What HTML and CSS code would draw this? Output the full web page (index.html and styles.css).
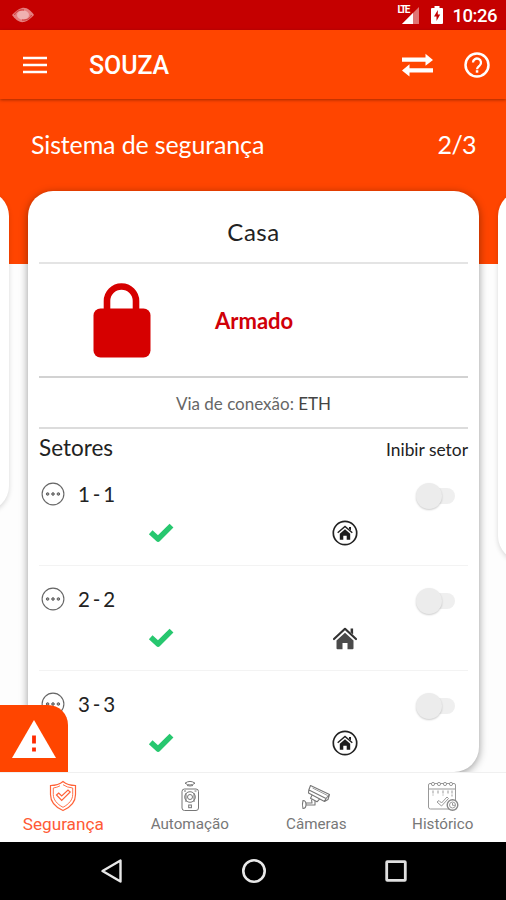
FILE: index.html
```html
<!DOCTYPE html>
<html lang="pt-BR">
<head>
<meta charset="utf-8">
<title>Souza</title>
<link rel="stylesheet" href="styles.css">
</head>
<body>
<svg class="defs" width="0" height="0">
  <symbol id="more" viewBox="0 0 24 24"><circle cx="12" cy="12" r="10.9" fill="none" stroke="#666" stroke-width="1.1"/><g fill="#999" stroke="#555" stroke-width=".9"><circle cx="6.6" cy="12" r="1.3"/><circle cx="12" cy="12" r="1.3"/><circle cx="17.4" cy="12" r="1.3"/></g></symbol>
  <symbol id="check" viewBox="0 0 24 20"><path d="M2.2 9.8 9.2 16.2 22 3.4" fill="none" stroke="#27c76f" stroke-width="5.2" stroke-linejoin="round"/></symbol>
  <symbol id="home-ring" viewBox="0 0 26 26"><circle cx="13" cy="13" r="11.7" fill="none" stroke="#222" stroke-width="1.7"/><path d="M5.7 12.8 13 6.4l7.3 6.4" fill="none" stroke="#222" stroke-width="1.5"/><path d="M17 7h2v3.500l-2-1.700zM13 9.300l5.200 4.500v6h-3.500v-4h-3.400v4H7.800v-6z" fill="#1b1b1b"/></symbol>
  <symbol id="home" viewBox="0 0 26 26"><path d="M2 14 13 3.800 24 14" fill="none" stroke="#333" stroke-width="2.200" stroke-linecap="round" stroke-linejoin="round"/><path d="M18.600 3.600h2.500v6l-2.500-2.400z" fill="#333"/><path d="M13 7.700l8.500 7.800v7.800q0 1-1 1h-5v-6.300h-5v6.300h-5q-1 0-1-1v-7.800z" fill="#4a4a4a"/></symbol>
</svg>
<div class="screen">
  <div class="status">
    <svg class="brand" width="22" height="16" viewBox="0 0 22 16"><path d="M0 8C3 5 6 2 10 1c5-1 9 3 12 7-3 3-6 6-10 7C7 16 3 12 0 8z" fill="#e57f7f"/><ellipse cx="11" cy="8" rx="6" ry="4.500" fill="#efb0b0"/><path d="M2.500 8C4 4 8 2.500 12 3M19.500 8C18 12 14 13.500 10 13" fill="none" stroke="#cf3030" stroke-width="1"/></svg>
    <div class="status-right">
      <div class="signal"><span class="lte">LTE</span><svg width="22" height="18" viewBox="0 0 22 18"><path d="M4 18 21 1v17z" fill="#df7474"/><path d="M4 18 15 7v11z" fill="#fff"/></svg></div>
      <svg class="battery" width="12" height="18" viewBox="0 0 12 18"><path d="M3.500 0h5v2H11q1 0 1 1v14q0 1-1 1H1q-1 0-1-1V3q0-1 1-1h2.500z" fill="#fff"/><path d="M6.800 4 3 10.500h2.500V15l3.700-6.500H6.800z" fill="#c50000"/></svg>
      <span class="clock">10:26</span>
    </div>
  </div>
  <header class="appbar">
    <svg class="menu" width="24" height="18" viewBox="0 0 24 18"><path d="M0 2h24M0 9h24M0 16h24" stroke="#fff" stroke-width="2.700"/></svg>
    <h1>SOUZA</h1>
    <svg class="swap" width="31" height="24" viewBox="0 0 31 24"><path d="M0 4.500h23.500V.7L31 7l-7.500 5.800V8.800H0zM31 15.200H7.500v-3.900L0 17.500l7.500 6v-4H31z" fill="#fff"/></svg>
    <svg class="help" width="26" height="26" viewBox="0 0 26 26"><circle cx="13" cy="13" r="11.500" fill="none" stroke="#fff" stroke-width="2.500"/><path d="M9 10.600a4 4 0 1 1 6.700 2.900C14.200 14.800 13 15.500 13 17.200" fill="none" stroke="#fff" stroke-width="2.300"/><rect x="11.800" y="18.200" width="2.500" height="2.500" fill="#fff"/></svg>
  </header>
  <main>
    <div class="section-head"><span>Sistema de segurança</span><span class="count">2/3</span></div>
    <div class="carousel">
      <section class="card prev"></section>
      <section class="card">
        <h2>Casa</h2>
        <div class="state">
          <svg class="lock" width="58" height="76" viewBox="0 0 58 76"><path d="M14 28V18a14.500 14.500 0 0 1 29 0v10" fill="none" stroke="#d60000" stroke-width="6.600"/><rect x=".5" y="25.500" width="57" height="49" rx="7" fill="#d60000"/></svg>
          <span class="armed">Armado</span>
        </div>
        <p class="via">Via de conexão: <b>ETH</b></p>
        <div class="sectors-head"><span>Setores</span><span class="inhibit">Inibir setor</span></div>
        <div class="sector">
          <div class="top"><svg class="more"><use href="#more"/></svg><span class="name">1 - 1</span><i class="toggle"></i></div>
          <div class="icons"><svg class="check"><use href="#check"/></svg><svg class="house"><use href="#home-ring"/></svg></div>
        </div>
        <div class="sector">
          <div class="top"><svg class="more"><use href="#more"/></svg><span class="name">2 - 2</span><i class="toggle"></i></div>
          <div class="icons"><svg class="check"><use href="#check"/></svg><svg class="house"><use href="#home"/></svg></div>
        </div>
        <div class="sector">
          <div class="top"><svg class="more"><use href="#more"/></svg><span class="name">3 - 3</span><i class="toggle"></i></div>
          <div class="icons"><svg class="check"><use href="#check"/></svg><svg class="house"><use href="#home-ring"/></svg></div>
        </div>
      </section>
      <section class="card next"></section>
    </div>
    <div class="alert"><svg width="44" height="38" viewBox="0 0 44 38"><path d="M22 0 44 38H0z" fill="#fff"/><path d="M20.100 15.500h3.800v8h-3.800zM20.100 27.500h3.800v4h-3.800z" fill="#ff2a00"/></svg></div>
  </main>
  <nav class="tabs">
    <div class="tab active">
      <svg width="30" height="32" viewBox="0 0 30 32" fill="none" stroke="#ff6238" stroke-width="1.200"><path d="M15 1.500C11 5 7 5.500 2.500 5.500v9C2.500 22 8 27.500 15 30.500 22 27.500 27.500 22 27.500 14.500v-9C23 5.500 19 5 15 1.500z"/><path d="M12 5.800Q9 7.500 5.300 8v6.500c0 5 3.500 9.500 9.700 12.800 6.200-3.300 9.700-7.800 9.700-12.800V8Q19 7.500 15 4.700" stroke-width=".9"/><path d="m8.500 15 2.200-2 3 3 6.300-6 2.200 2-8.500 8.500z"/></svg>
      <span>Segurança</span>
    </div>
    <div class="tab">
      <svg width="30" height="32" viewBox="0 0 30 32" fill="none" stroke="#777" stroke-width="1"><path d="M10 3.200q5-3.600 10 0M10 3.200q5 3.600 10 0M12 5.500q3 1 6 0"/><rect x="7" y="9" width="16.500" height="21.500" rx="2.500"/><circle cx="15" cy="17" r="5.300"/><circle cx="15" cy="17" r="2.500"/><path d="M11 13v9M19 13v9M9 11h2M19.500 11h2"/><rect x="13.700" y="25" width="2.700" height="2.700"/></svg>
      <span>Automação</span>
    </div>
    <div class="tab">
      <svg width="32" height="32" viewBox="0 0 32 32" fill="none" stroke="#777" stroke-width="1.100" stroke-linejoin="round"><path d="m10.500 5.500 19 9-1.500 5-3.500 2-16-8.500 .3-3zM9 10l17 8.500 3.500-4M26 18.500l-1.500 3M12 15.300l-1.500 3 6.500 3.500 2.500-2.700"/><path d="M15 21v4H6v-2h6l-.5-3.500M3 20.500q3 0 3 4t-3 4q-1.200-4 0-8z"/><path d="m12.500 8 15 7.500" stroke-width=".7"/></svg>
      <span>Câmeras</span>
    </div>
    <div class="tab">
      <svg width="32" height="32" viewBox="0 0 32 32" fill="none" stroke="#999" stroke-width="1"><path d="M24 29H3.500q-2 0-2-2V5q0-1.500 1.500-1.500h24q1.500 0 1.500 1.500v16M1.500 9h27" /><path d="M6 10.500v5M11 10.500v4M16 10.500v5M21 10.500v4M25 10.500v6" stroke-dasharray="3 1"/><g fill="#fff"><circle cx="6" cy="4" r="1.600"/><circle cx="12" cy="4" r="1.600"/><circle cx="18" cy="4" r="1.600"/><circle cx="24" cy="4" r="1.600"/></g><path d="m10 22 2-1.500 2.500 2.500 5.500-6 1.500 1.500-7 7.500z"/><circle cx="25.500" cy="25" r="5.300" fill="#fff" stroke="#888" stroke-width="1.400"/><circle cx="25.500" cy="25" r="3"/><path d="M25.500 23v2.300H28"/></svg>
      <span>Histórico</span>
    </div>
  </nav>
  <footer class="sysnav">
    <svg width="24" height="26" viewBox="0 0 24 26"><path d="M20.500 2.500v21L2.500 13z" fill="none" stroke="#e8e8e8" stroke-width="2.400" stroke-linejoin="round"/></svg>
    <svg class="home-key" width="26" height="26" viewBox="0 0 26 26"><circle cx="13" cy="13" r="10.700" fill="none" stroke="#e8e8e8" stroke-width="2.600"/></svg>
    <svg width="22" height="22" viewBox="0 0 22 22"><rect x="1.700" y="1.700" width="18.600" height="18.600" rx=".6" fill="none" stroke="#e0e0e0" stroke-width="2.800"/></svg>
  </footer>
</div>
</body>
</html>
```
FILE: styles.css
```css
* { box-sizing: border-box; }
body { margin: 0; font-family: Lato, "Liberation Sans", sans-serif; color: #222; }
svg { display: block; flex: none; }
h1, h2, p { margin: 0; font-weight: 400; }
.defs { position: absolute; }
.screen { width: 506px; height: 900px; overflow: hidden; display: flex; flex-direction: column; background: #fff; }

.status { height: 30px; flex: none; background: #c50000; color: #fff; display: flex; align-items: center; justify-content: space-between; padding: 0 9px 0 12px; }
.status-right { display: flex; align-items: center; gap: 10px; font-family: Roboto, sans-serif; }
.signal { display: flex; position: relative; margin-right: 1px; }
.lte { position: absolute; left: 0; top: -1px; font-size: 10px; line-height: 9px; font-weight: 700; letter-spacing: -1.7px; }
.clock { font-size: 18.5px; font-weight: 500; letter-spacing: -0.5px; line-height: 22px; margin-top: 2px; }

.appbar { height: 69px; flex: none; background: #ff4500; color: #fff; display: flex; align-items: center; padding: 0 16px 0 23px; box-shadow: 0 1px 3px rgba(90, 20, 0, .55); z-index: 1; }
.appbar h1 { font: 500 25px/30px Roboto, sans-serif; margin-left: 42px; margin-top: 3px; letter-spacing: -0.1px; flex: 1; }
.swap { margin-right: 31px; }

main { height: 673px; flex: none; position: relative; overflow: hidden; background: linear-gradient(#ff4500 165px, #fdfdfd 165px); }
.section-head { height: 92px; padding: 0 30px 2px 31px; display: flex; justify-content: space-between; align-items: center; color: #fff; font-size: 25px; line-height: 30px; letter-spacing: -0.14px; }
.count { letter-spacing: -0.6px; }
.carousel { display: flex; gap: 19px; align-items: flex-start; margin-left: -442px; width: 1391px; }
.card { width: 451px; height: 581px; flex: none; background: #fff; border-radius: 25px; padding: 0 11px; box-shadow: 0 2px 8px rgba(0, 0, 0, .4); overflow: hidden; }
.card.prev { height: 320px; box-shadow: 0 2px 5px rgba(0, 0, 0, .15); }
.card.next { height: 370px; box-shadow: 0 2px 5px rgba(0, 0, 0, .15); }
.card h2 { height: 73px; border-bottom: 2px solid #e4e4e4; text-align: center; font-size: 24px; line-height: 82px; letter-spacing: .5px; }
.state { height: 114px; border-bottom: 2px solid #d2d2d2; display: flex; align-items: center; padding: 2px 0 0 54px; }
.armed { color: #d00008; font-size: 22px; font-weight: 700; margin-left: 64px; padding-bottom: 2px; }
.via { height: 51px; border-bottom: 2px solid #dcdcdc; text-align: center; color: #666; font-size: 17px; line-height: 52px; }
.via b { font-weight: 400; color: #444; }
.sectors-head { height: 32px; display: flex; justify-content: space-between; align-items: center; font-size: 22.500px; padding-top: 5px; }
.inhibit { font-size: 17.400px; padding-top: 4px; }
.sector { height: 105px; border-bottom: 1px solid #f3f3f3; padding: 18px 13px 0 2px; }
.top { display: flex; align-items: center; height: 30px; }
.name { font-size: 20.500px; letter-spacing: -0.9px; word-spacing: -0.6px; padding-bottom: 1px; }
.more { width: 24px; height: 24px; margin-right: 13px; }
.toggle { margin-left: auto; margin-top: 3px; width: 39px; height: 26px; display: flex; align-items: center; position: relative; }
.toggle::before { content: ""; width: 26px; height: 26px; border-radius: 50%; background: #ececec; box-shadow: 0 1px 2px rgba(0, 0, 0, .2); z-index: 1; }
.toggle::after { content: ""; width: 26px; height: 16px; margin-left: -13px; border-radius: 8px; background: #efefef; flex: none; }
.icons { display: flex; align-items: center; height: 26px; margin-top: 11px; padding-left: 107px; }
.check { width: 26px; height: 21px; margin-bottom: 1px; }
.house { width: 26px; height: 26px; margin-left: 158px; }
.alert { position: absolute; left: 0; bottom: 0; width: 68px; height: 67px; background: #ff4500; border-radius: 0 20px 0 0; padding: 15px 0 0 12px; }

.tabs { height: 70px; flex: none; background: #fff; border-top: 1px solid #f0f0f0; display: flex; color: #777; font: 15.200px/20px Roboto, sans-serif; }
.tab { flex: 1; display: flex; flex-direction: column; align-items: center; padding-top: 7px; gap: 2px; }
.active { color: #ff5a35; font-size: 17.200px; }
.sysnav { height: 58px; flex: none; background: #000; display: flex; align-items: center; justify-content: space-between; padding: 0 99px 0 100px; }
.home-key { margin-right: 2px; }
```
